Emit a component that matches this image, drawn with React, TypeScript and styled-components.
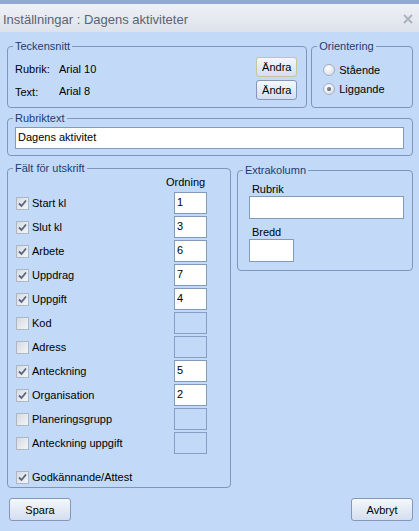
import React from 'react'
import styled, { createGlobalStyle } from 'styled-components'

const GlobalStyle = createGlobalStyle`
  html, body {
    margin: 0;
    padding: 0;
  }
  body {
    font-family: 'Liberation Sans', Arial, sans-serif;
    font-size: 11px;
    color: #000000;
    background: #c2daf8;
  }
`

const StyledWindow = styled.div`
  width: 419px;
  height: 531px;
  display: flex;
  flex-direction: column;
  background: #c2daf8;
  overflow: hidden;
`
const StyledTitleBar = styled.div`
  height: 32px;
  box-sizing: border-box;
  border-top: 4px solid #8fa9d2;
  padding: 2px 6px 0 3px;
  display: flex;
  align-items: center;
  justify-content: space-between;
  background: linear-gradient(#eef1f5, #dde3eb);
  font-size: 13px;
  color: #5b6371;
`
const StyledBody = styled.div`
  flex: 1;
  padding: 7px 6px 0 7px;
  display: flex;
  flex-direction: column;
`
const StyledRow = styled.div<{ $gap: number; $top?: number }>`
  display: flex;
  align-items: flex-start;
  gap: ${p => p.$gap}px;
  margin-top: ${p => p.$top || 0}px;
`
const StyledGroup = styled.fieldset<{ $width?: number; $height: number; $offset?: number }>`
  margin: ${p => p.$offset || 0}px 0 0 0;
  padding: 0;
  min-width: 0;
  box-sizing: border-box;
  width: ${p => (p.$width ? `${p.$width}px` : '100%')};
  height: ${p => p.$height}px;
  border: 1px solid #7d96ba;
  border-radius: 4px;
`
const StyledLegend = styled.legend`
  margin-left: 5px;
  padding: 0 2px;
  font-size: 11px;
  line-height: 14px;
  color: #1d3b72;
`
const StyledFontGrid = styled.div`
  display: grid;
  grid-template-columns: 44px 1fr 41px;
  grid-auto-rows: 20px;
  row-gap: 3px;
  align-items: center;
  padding: 4px 9px 0 7px;
`
const StyledFontLabel = styled.span<{ $lower?: boolean }>`
  padding-top: ${p => (p.$lower ? 3 : 2)}px;
`
const StyledButton = styled.button<{ $width: number; $height: number; $focused?: boolean }>`
  box-sizing: border-box;
  width: ${p => p.$width}px;
  height: ${p => p.$height}px;
  padding: 0;
  border: 1px solid ${p => (p.$focused ? '#c9c597' : '#8497b8')};
  border-radius: 3px;
  background: linear-gradient(#f5f8fc, #e4ebf5 50%, #d3def0);
  font-family: 'Liberation Sans', Arial, sans-serif;
  font-size: 11px;
  color: #000000;
`
const StyledRadioList = styled.div`
  display: flex;
  flex-direction: column;
  gap: 1px;
  padding: 8px 0 0 11px;
`
const StyledRadioRow = styled.label`
  display: flex;
  align-items: center;
  gap: 4px;
  height: 18px;
`
const StyledRadio = styled.span<{ $checked?: boolean }>`
  position: relative;
  box-sizing: border-box;
  width: 12px;
  height: 12px;
  border: 1px solid #a5afbf;
  border-radius: 50%;
  background: radial-gradient(circle at 40% 35%, #ffffff, #dfe3e9 70%, #cdd3dc);
  &::after {
    content: '';
    display: ${p => (p.$checked ? 'block' : 'none')};
    position: absolute;
    left: 3px;
    top: 3px;
    width: 4px;
    height: 4px;
    border-radius: 50%;
    background: radial-gradient(circle at 40% 40%, #8a93a3, #3d4656);
  }
`
const StyledTextPad = styled.div`
  padding: 2px 8px 0 7px;
`
const StyledInput = styled.input<{ $width?: number; $height?: number }>`
  display: block;
  box-sizing: border-box;
  width: ${p => (p.$width ? `${p.$width}px` : '100%')};
  height: ${p => p.$height || 22}px;
  margin: 0;
  padding: 0 2px 2px 2px;
  border: 1px solid #7f9db9;
  background: #ffffff;
  font-family: 'Liberation Sans', Arial, sans-serif;
  font-size: 11px;
  color: #000000;
  outline: none;
  &:disabled {
    background: #c2daf8;
    border-color: #849fc3;
  }
`
const StyledFieldList = styled.div`
  display: flex;
  flex-direction: column;
  padding-left: 8px;
`
const StyledFieldRow = styled.div<{ $last?: boolean }>`
  display: grid;
  grid-template-columns: 158px 33px;
  align-items: center;
  height: ${p => (p.$last ? 16 : 24)}px;
  margin-top: ${p => (p.$last ? 14 : 0)}px;
`
const StyledHeader = styled.div`
  height: 16px;
  line-height: 14px;
  padding-left: 158px;
`
const StyledCheckLabel = styled.label`
  display: flex;
  align-items: center;
  gap: 3px;
`
const StyledCheckbox = styled.span`
  display: flex;
  align-items: center;
  justify-content: center;
  box-sizing: border-box;
  width: 13px;
  height: 13px;
  border: 1px solid #adb6c4;
  background: linear-gradient(135deg, #d6dae1, #f4f5f7);
`
const StyledExtraPad = styled.div`
  display: flex;
  flex-direction: column;
  padding: 5px 8px 0 11px;
`
const StyledExtraLabel = styled.span<{ $top?: number }>`
  line-height: 14px;
  margin: ${p => p.$top || 0}px 0 0 3px;
`
const StyledFooter = styled.div`
  display: flex;
  justify-content: space-between;
  margin-top: 10px;
  padding-left: 2px;
`

const fields: { label: string; checked: boolean; order?: string }[] = [
  { label: 'Start kl', checked: true, order: '1' },
  { label: 'Slut kl', checked: true, order: '3' },
  { label: 'Arbete', checked: true, order: '6' },
  { label: 'Uppdrag', checked: true, order: '7' },
  { label: 'Uppgift', checked: true, order: '4' },
  { label: 'Kod', checked: false },
  { label: 'Adress', checked: false },
  { label: 'Anteckning', checked: true, order: '5' },
  { label: 'Organisation', checked: true, order: '2' },
  { label: 'Planeringsgrupp', checked: false },
  { label: 'Anteckning uppgift', checked: false },
]

const Checkbox: React.FC<{ checked: boolean }> = ({ checked }) => (
  <StyledCheckbox>
    {checked && (
      <svg width="9" height="9" viewBox="0 0 9 9">
        <path d="M1 4.5 L3.5 7 L8 1.5" fill="none" stroke="#56647e" strokeWidth="1.8" />
      </svg>
    )}
  </StyledCheckbox>
)

const App: React.FC = () => {
  return (
    <StyledWindow>
      <GlobalStyle />
      <StyledTitleBar>
        <span>Inställningar : Dagens aktiviteter</span>
        <svg width="10" height="10" viewBox="0 0 10 10">
          <path d="M1 1 L9 9 M9 1 L1 9" stroke="#aab2be" strokeWidth="2" />
        </svg>
      </StyledTitleBar>

      <StyledBody>
        <StyledRow $gap={4}>
          <StyledGroup $width={301} $height={69}>
            <StyledLegend>Teckensnitt</StyledLegend>
            <StyledFontGrid>
              <StyledFontLabel $lower>Rubrik:</StyledFontLabel>
              <StyledFontLabel $lower>Arial 10</StyledFontLabel>
              <StyledButton $width={41} $height={20} $focused>
                Ändra
              </StyledButton>
              <StyledFontLabel $lower>Text:</StyledFontLabel>
              <StyledFontLabel>Arial 8</StyledFontLabel>
              <StyledButton $width={41} $height={20}>
                Ändra
              </StyledButton>
            </StyledFontGrid>
          </StyledGroup>
          <StyledGroup $width={102} $height={69}>
            <StyledLegend>Orientering</StyledLegend>
            <StyledRadioList>
              <StyledRadioRow>
                <StyledRadio />
                Stående
              </StyledRadioRow>
              <StyledRadioRow>
                <StyledRadio $checked />
                Liggande
              </StyledRadioRow>
            </StyledRadioList>
          </StyledGroup>
        </StyledRow>

        <StyledRow $gap={0} $top={3}>
          <StyledGroup $height={45}>
            <StyledLegend>Rubriktext</StyledLegend>
            <StyledTextPad>
              <StyledInput defaultValue="Dagens aktivitet" />
            </StyledTextPad>
          </StyledGroup>
        </StyledRow>

        <StyledRow $gap={6} $top={5}>
          <StyledGroup $width={225} $height={327}>
            <StyledLegend>Fält för utskrift</StyledLegend>
            <StyledHeader>Ordning</StyledHeader>
            <StyledFieldList>
              {fields.map(field => (
                <StyledFieldRow key={field.label}>
                  <StyledCheckLabel>
                    <Checkbox checked={field.checked} />
                    {field.label}
                  </StyledCheckLabel>
                  <StyledInput
                    $width={33}
                    disabled={!field.checked}
                    defaultValue={field.order || ''}
                  />
                </StyledFieldRow>
              ))}
              <StyledFieldRow $last>
                <StyledCheckLabel>
                  <Checkbox checked />
                  Godkännande/Attest
                </StyledCheckLabel>
              </StyledFieldRow>
            </StyledFieldList>
          </StyledGroup>
          <StyledGroup $width={177} $height={108} $offset={2}>
            <StyledLegend>Extrakolumn</StyledLegend>
            <StyledExtraPad>
              <StyledExtraLabel>Rubrik</StyledExtraLabel>
              <StyledInput $height={23} />
              <StyledExtraLabel $top={6}>Bredd</StyledExtraLabel>
              <StyledInput $width={45} $height={23} />
            </StyledExtraPad>
          </StyledGroup>
        </StyledRow>

        <StyledFooter>
          <StyledButton $width={62} $height={23}>
            Spara
          </StyledButton>
          <StyledButton $width={62} $height={23}>
            Avbryt
          </StyledButton>
        </StyledFooter>
      </StyledBody>
    </StyledWindow>
  )
}

export default App
